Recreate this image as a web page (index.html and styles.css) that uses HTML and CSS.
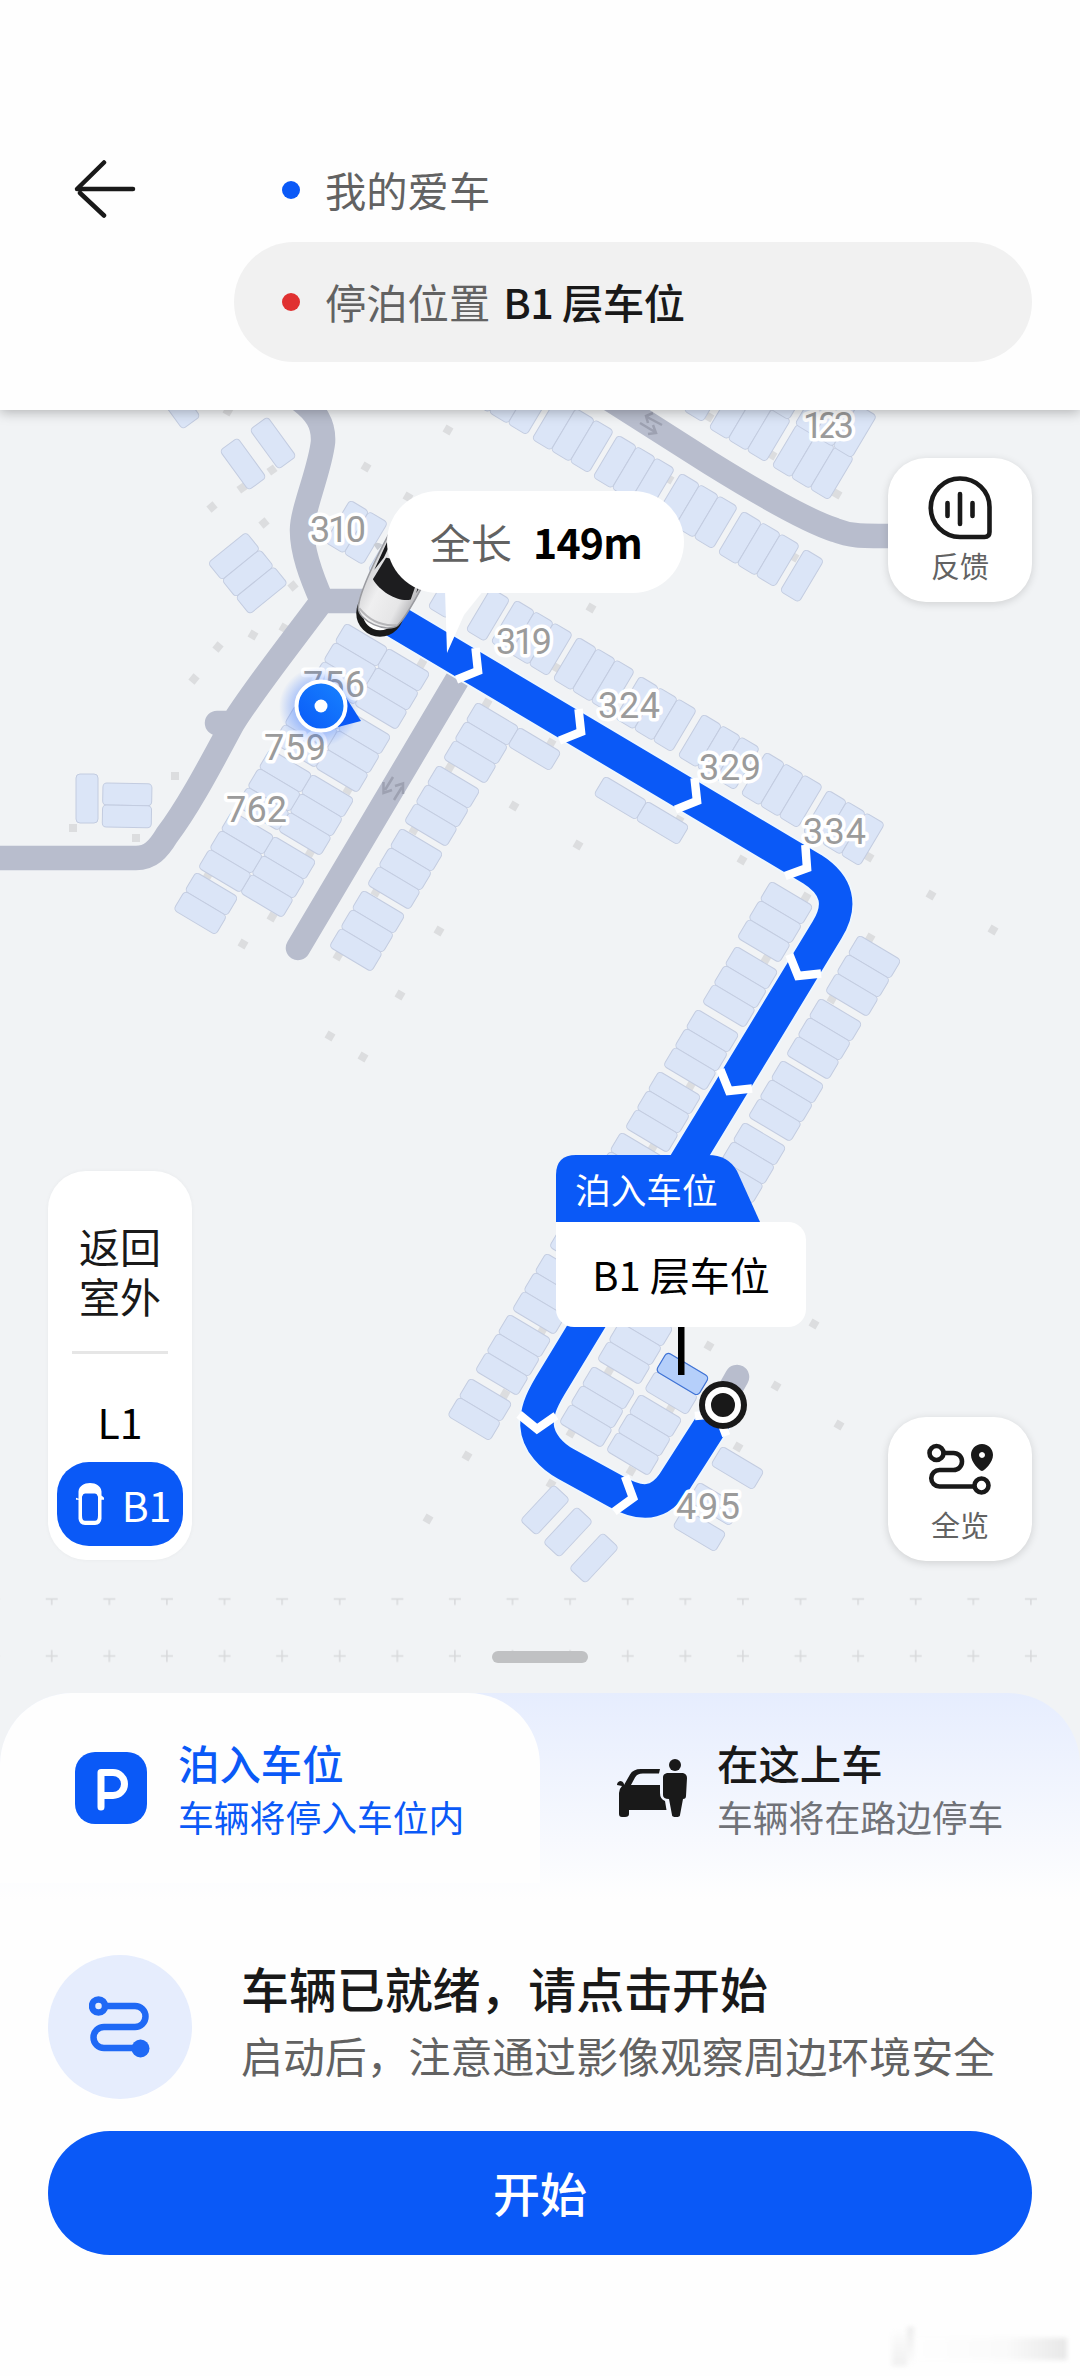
FILE: index.html
```html
<!DOCTYPE html>
<html lang="zh-CN">
<head>
<meta charset="utf-8">
<title>泊入车位</title>
<link rel="stylesheet" href="styles.css">
</head>
<body>
<div class="screen">
  <header class="header">
    <svg class="back" viewBox="0 0 62 58" width="62" height="58"><path d="M59 29H3L30 2.500M6 33L30 55.500"/></svg>
    <div class="route-fields">
      <div class="field"><i class="dot dot-blue"></i><span>我的爱车</span></div>
      <div class="field field-active"><i class="dot dot-red"></i><span>停泊位置</span><b>B1 层车位</b></div>
    </div>
  </header>

  <main class="map">
    <svg class="map-canvas" viewBox="0 410 1080 1355" width="1080" height="1355">
      <defs>
        <rect id="h" width="49" height="22" rx="4"/>
        <rect id="v" width="22" height="49" rx="4"/>
        <g id="a1"><use href="#h"/></g>
        <g id="a2"><use href="#h"/><use href="#h" y="22"/></g>
        <g id="a3"><use href="#h"/><use href="#h" y="22"/><use href="#h" y="44"/></g>
        <g id="b1"><use href="#v"/></g>
        <g id="b2"><use href="#v"/><use href="#v" x="22"/></g>
        <g id="b3"><use href="#v"/><use href="#v" x="22"/><use href="#v" x="44"/></g>
        <rect id="p" x="-4" y="-4" width="8" height="8"/>
        <path id="chev" d="M-14-18.500L0 0L-14 18.500"/>
        <pattern id="plus" x="23" y="1627.500" width="57.600" height="57" patternUnits="userSpaceOnUse"><path d="M22.700 28.500h12M28.700 22.500v12"/></pattern>
        <pattern id="tee" x="23" y="1570.500" width="57.600" height="57" patternUnits="userSpaceOnUse"><path d="M22.700 28.500h12M28.700 28.500v6"/></pattern>
        <radialGradient id="glow"><stop offset=".5" stop-color="#2a6cff" stop-opacity=".42"/><stop offset="1" stop-color="#2a6cff" stop-opacity="0"/></radialGradient>
        <linearGradient id="dotfill" x1="0" y1="1" x2="1" y2="0"><stop offset="0" stop-color="#0a59f7"/><stop offset="1" stop-color="#1783ff"/></linearGradient>
        <linearGradient id="body" x1="0" y1="0" x2="1" y2="0"><stop offset="0" stop-color="#d5d5d7"/><stop offset=".3" stop-color="#efeff0"/><stop offset=".75" stop-color="#e6e6e7"/><stop offset="1" stop-color="#b9b9bc"/></linearGradient>
      </defs>
      <rect y="1590" width="1080" height="24" fill="url(#tee)" class="marks"/>
      <rect y="1645" width="1080" height="24" fill="url(#plus)" class="marks"/>

      <g class="pillars">
        <use href="#p" transform="translate(448 430)rotate(30)"/><use href="#p" transform="translate(366 467)rotate(30)"/><use href="#p" transform="translate(408 497)rotate(30)"/>
        <use href="#p" transform="translate(272 470)rotate(54)"/><use href="#p" transform="translate(242 488)rotate(54)"/><use href="#p" transform="translate(228 411)rotate(30)"/>
        <use href="#p" transform="translate(212 507)rotate(50)"/><use href="#p" transform="translate(264 523)rotate(50)"/><use href="#p" transform="translate(293 586)rotate(50)"/>
        <use href="#p" transform="translate(284 628)rotate(30)"/><use href="#p" transform="translate(253 635)rotate(30)"/><use href="#p" transform="translate(218 647)rotate(40)"/><use href="#p" transform="translate(194 679)rotate(40)"/>
        <use href="#p" transform="translate(175 776)"/><use href="#p" transform="translate(73 828)"/><use href="#p" transform="translate(136 838)"/>
        <use href="#p" transform="translate(422 663)rotate(30)"/><use href="#p" transform="translate(348 790)rotate(30)"/><use href="#p" transform="translate(310 853)rotate(30)"/><use href="#p" transform="translate(272 917)rotate(30)"/><use href="#p" transform="translate(207 877)rotate(30)"/>
        <use href="#p" transform="translate(243 944)rotate(30)"/><use href="#p" transform="translate(338 956)rotate(30)"/><use href="#p" transform="translate(376 892)rotate(30)"/><use href="#p" transform="translate(414 830)rotate(30)"/><use href="#p" transform="translate(450 767)rotate(30)"/>
        <use href="#p" transform="translate(487 703)rotate(30)"/><use href="#p" transform="translate(551 743)rotate(30)"/><use href="#p" transform="translate(514 806)rotate(30)"/><use href="#p" transform="translate(439 931)rotate(30)"/><use href="#p" transform="translate(400 995)rotate(30)"/><use href="#p" transform="translate(330 1036)rotate(30)"/><use href="#p" transform="translate(363 1057)rotate(30)"/>
        <use href="#p" transform="translate(591 608)rotate(30)"/><use href="#p" transform="translate(557 668)rotate(30)"/><use href="#p" transform="translate(669 479)rotate(30)"/><use href="#p" transform="translate(794 557)rotate(30)"/><use href="#p" transform="translate(837 494)rotate(30)"/><use href="#p" transform="translate(772 455)rotate(30)"/><use href="#p" transform="translate(709 417)rotate(30)"/>
        <use href="#p" transform="translate(679 820)rotate(30)"/><use href="#p" transform="translate(578 845)rotate(30)"/><use href="#p" transform="translate(742 860)rotate(30)"/><use href="#p" transform="translate(869 857)rotate(30)"/><use href="#p" transform="translate(806 897)rotate(30)"/><use href="#p" transform="translate(931 895)rotate(30)"/><use href="#p" transform="translate(993 930)rotate(30)"/>
        <use href="#p" transform="translate(870 938)rotate(30)"/><use href="#p" transform="translate(832 999)rotate(30)"/><use href="#p" transform="translate(766 959)rotate(30)"/><use href="#p" transform="translate(691 1085)rotate(30)"/><use href="#p" transform="translate(653 1147)rotate(30)"/>
        <use href="#p" transform="translate(542 1331)rotate(30)"/><use href="#p" transform="translate(505 1394)rotate(30)"/><use href="#p" transform="translate(467 1456)rotate(30)"/><use href="#p" transform="translate(609 1371)rotate(30)"/><use href="#p" transform="translate(571 1433)rotate(30)"/><use href="#p" transform="translate(671 1408)rotate(30)"/><use href="#p" transform="translate(631 1471)rotate(30)"/>
        <use href="#p" transform="translate(709 1346)rotate(30)"/><use href="#p" transform="translate(776 1386)rotate(30)"/><use href="#p" transform="translate(814 1324)rotate(30)"/><use href="#p" transform="translate(839 1425)rotate(30)"/><use href="#p" transform="translate(738 1447)rotate(30)"/><use href="#p" transform="translate(551 1484)rotate(30)"/><use href="#p" transform="translate(428 1519)rotate(30)"/>
      </g>

      <g class="bays">
        <use href="#h" transform="translate(177 403)rotate(54)translate(-24.500 -11)"/>
        <use href="#h" transform="translate(273 443)rotate(54)translate(-24.500 -11)"/>
        <use href="#h" transform="translate(243 464)rotate(54)translate(-24.500 -11)"/>
        <use href="#a3" transform="translate(208 563)rotate(-39)"/>
        <use href="#b2" transform="translate(350 500)rotate(30.800)"/>
        <use href="#b1" transform="translate(393 528)rotate(30.800)"/>
        <use href="#a3" transform="translate(388 648)rotate(30.800)"/><use href="#a3" transform="translate(349 711)rotate(30.800)"/><use href="#a3" transform="translate(312 774)rotate(30.800)"/><use href="#a3" transform="translate(274 836)rotate(30.800)"/>
        <use href="#a3" transform="translate(346 623)rotate(30.800)"/><use href="#a3" transform="translate(307 686)rotate(30.800)"/><use href="#a3" transform="translate(270 749)rotate(30.800)"/><use href="#a3" transform="translate(232 811)rotate(30.800)"/><use href="#a2" transform="translate(196 872)rotate(30.800)"/>
        <use href="#a3" transform="translate(477 702)rotate(30.800)"/><use href="#a1" transform="translate(519 727)rotate(30.800)"/><use href="#a3" transform="translate(438 765)rotate(30.800)"/><use href="#a3" transform="translate(401 828)rotate(30.800)"/><use href="#a3" transform="translate(363 890)rotate(30.800)"/>
        <use href="#a1" transform="translate(605 776)rotate(30.800)"/><use href="#a1" transform="translate(647 801)rotate(30.800)"/>
        <use href="#v" x="76" y="774"/><use href="#a2" transform="translate(103 783)rotate(1)"/>
        <use href="#b3" transform="translate(495 359)rotate(30.800)"/><use href="#b3" transform="translate(557 397)rotate(30.800)"/><use href="#b3" transform="translate(618 435)rotate(30.800)"/><use href="#b3" transform="translate(681 473)rotate(30.800)"/><use href="#b3" transform="translate(743 511)rotate(30.800)"/><use href="#b1" transform="translate(805 549)rotate(30.800)"/>
        <use href="#b3" transform="translate(671 346)rotate(30.800)"/><use href="#b3" transform="translate(734 386)rotate(30.800)"/><use href="#b3" transform="translate(797 424)rotate(30.800)"/><use href="#b3" transform="translate(757 344)rotate(30.800)"/><use href="#b3" transform="translate(820 382)rotate(30.800)"/>
        <use href="#b1" transform="translate(453 565)rotate(30.800)"/><use href="#b1" transform="translate(491 588)rotate(30.800)"/>
        <use href="#b3" transform="translate(516 600)rotate(30.800)"/><use href="#b3" transform="translate(578 637)rotate(30.800)"/><use href="#b3" transform="translate(640 676)rotate(30.800)"/><use href="#b3" transform="translate(703 714)rotate(30.800)"/><use href="#b3" transform="translate(766 752)rotate(30.800)"/><use href="#b3" transform="translate(828 790)rotate(30.800)"/>
        <use href="#a3" transform="translate(771 881)rotate(30.800)"/><use href="#a3" transform="translate(736 946)rotate(30.800)"/><use href="#a3" transform="translate(697 1009)rotate(30.800)"/><use href="#a3" transform="translate(659 1071)rotate(30.800)"/><use href="#a3" transform="translate(621 1132)rotate(30.800)"/>
        <use href="#a3" transform="translate(859 935)rotate(30.800)"/><use href="#a3" transform="translate(820 998)rotate(30.800)"/><use href="#a3" transform="translate(782 1060)rotate(30.800)"/><use href="#a3" transform="translate(744 1122)rotate(30.800)"/>
        <use href="#a3" transform="translate(583 1190)rotate(30.800)"/><use href="#a3" transform="translate(546 1253)rotate(30.800)"/><use href="#a3" transform="translate(509 1314)rotate(30.800)"/><use href="#a2" transform="translate(470 1378)rotate(30.800)"/>
        <use href="#a3" transform="translate(631 1303)rotate(30.800)"/><use href="#a3" transform="translate(593 1366)rotate(30.800)"/>
        <use href="#a2" transform="translate(667 1352)rotate(30.800)"/><use href="#a3" transform="translate(640 1394)rotate(30.800)"/>
        <use href="#a1" transform="translate(722 1446)rotate(30.800)"/><use href="#a1" transform="translate(699 1482)rotate(30.800)"/><use href="#a1" transform="translate(684 1508)rotate(30.800)"/>
        <use href="#h" transform="translate(545 1510)rotate(-47)translate(-24.500 -11)"/><use href="#h" transform="translate(568 1532)rotate(-47)translate(-24.500 -11)"/><use href="#h" transform="translate(594 1558)rotate(-47)translate(-24.500 -11)"/>
      </g>

      <g class="roads">
        <path d="M300 400C316 412 324 424 323 442C320 470 302 510 302 530C302 552 311 576 322 601C290 644 255 688 233 723C215 756 190 805 167 835C158 850 150 858 136 858H-10M217 723H228M324 601H372M457 680L298 948M600 393L710 463C760 494 810 522 835 530C850 536 860 536 890 536M737 1377L724 1400"/>
      </g>
      <g class="road-arrows">
        <path d="M393 777L385 790M383.500 782V793L392 790M394 800L402 787M395 786L403 783.500V794"/>
        <path d="M662 425L647 417M653 413L646 416L648 423M640 423L655 432M653 425L656 433L648 434"/>
      </g>
      <use href="#h" class="bay-picked" transform="translate(667 1352)rotate(30.800)"/>

      <path class="route-edge" d="M385 615L812 869Q850 893 827 930L550 1386C540 1403 537 1412 537 1425C538 1443 553 1457 566 1464L617 1492C640 1505 658 1505 673 1484L716 1417"/>
      <path class="route" d="M385 615L812 869Q850 893 827 930L550 1386C540 1403 537 1412 537 1425C538 1443 553 1457 566 1464L617 1492C640 1505 658 1505 673 1484L716 1417"/>
      <g class="chevrons">
        <use href="#chev" transform="translate(478 671)rotate(31)"/><use href="#chev" transform="translate(581 732)rotate(31)"/><use href="#chev" transform="translate(697 801)rotate(31)"/><use href="#chev" transform="translate(807 868)rotate(33)"/>
        <use href="#chev" transform="translate(798 976)rotate(121)"/><use href="#chev" transform="translate(729 1091)rotate(121)"/><use href="#chev" transform="translate(537 1429)rotate(92)"/><use href="#chev" transform="translate(633 1498)rotate(17)"/><use href="#chev" transform="translate(718 1414)rotate(-58)"/>
      </g>

      <g class="map-labels">
        <text x="803" y="438" textLength="51">123</text>
        <text x="310" y="542" textLength="56">310</text>
        <text x="496" y="654" textLength="56">319</text>
        <text x="598" y="718" textLength="62">324</text>
        <text x="699" y="780" textLength="62">329</text>
        <text x="803" y="844" textLength="63">334</text>
        <text x="303" y="697" textLength="62">756</text>
        <text x="264" y="760" textLength="62">759</text>
        <text x="226" y="822" textLength="61">762</text>
        <text x="676" y="1519" textLength="64">495</text>
      </g>

      <g>
        <circle cx="380" cy="613" r="20.500" fill="#fff" stroke="#191919" stroke-width="6.500"/>
        <g transform="translate(373 623)rotate(27)">
          <path d="M-27-74q-7-1-8 4l6 3zM28-62q9 1 9 6l-9 2z" fill="#c9cdd4"/>
          <path d="M-20-7C-26-20-27-60-26-100H27C28-60 28-24 23-9C17 3-14 5-20-7Z" fill="url(#body)" stroke="#9a9ba0" stroke-width="1.500"/>
          <path d="M-20-39C-8-31 14-30 23-38L20-60C10-66-9-68-18-64Z" fill="#1d1d1f"/>
          <path d="M-23-48l3-15-1-34h-4zM25-46l-3-15 1-34h4z" fill="#17171a"/>
          <path d="M-15-69Q0-73 17-67V-110H-15Z" fill="#17171a"/>
          <path d="M-19-7Q3 3 22-9" fill="none" stroke="#b6b6b9" stroke-width="2"/>
        </g>
      </g>

      <g>
        <circle cx="319" cy="707" r="40" fill="url(#glow)"/>
        <path d="M345 696L361 721L338 727Z" fill="#0a59f7"/>
        <circle cx="321" cy="706" r="24.500" fill="url(#dotfill)" stroke="#fff" stroke-width="4"/>
        <circle cx="321" cy="706" r="6.500" fill="#fff"/>
      </g>

      <path d="M445 590H484L464 615L447 653Z" fill="#fff"/>
      <path d="M678 1325h6.500v50h-6.500z" fill="#000"/>
      <g><circle cx="723" cy="1405" r="24" fill="#191919"/><circle cx="723" cy="1405" r="15" fill="none" stroke="#fff" stroke-width="6"/></g>
    </svg>

    <div class="distance"><span>全长</span><b>149m</b></div>

    <div class="callout">
      <div class="callout-tab"><svg viewBox="0 0 204 67" width="204" height="67"><path d="M0 67V20Q0 0 20 0H152Q172 0 181 16L204 67Z"/></svg><span>泊入车位</span></div>
      <div class="callout-body">B1 层车位</div>
    </div>

    <button class="tool tool-feedback">
      <svg viewBox="0 0 66 66" width="66" height="66"><path d="M33 3.500C49 3.500 62.500 15.500 62.500 32V57Q62.500 62 57.500 62H33A29.200 29.200 0 0 1 33 3.500Z"/><path d="M20.500 28v13M33 19v30M45.500 28v13"/></svg>
      <span>反馈</span>
    </button>
    <button class="tool tool-overview">
      <svg viewBox="0 0 66 54" width="66" height="54"><circle cx="9.500" cy="11" r="7"/><circle cx="54.500" cy="43.500" r="7"/><path d="M17 11H26.500A8.500 8.500 0 0 1 26.500 28H12.500A8 8 0 0 0 12.500 44.500H47"/><path class="pin" fill-rule="evenodd" d="M55 2C61.500 2 66 7 66 13C66 20 58 28.500 55 29C52 28.500 44 20 44 13C44 7 48.500 2 55 2ZM55 10a3 3 0 1 0 .010 0Z"/></svg>
      <span>全览</span>
    </button>

    <nav class="floors">
      <div class="outdoor"><span>返回</span><span>室外</span></div>
      <div class="floor">L1</div>
      <div class="floor floor-on">
        <svg viewBox="0 0 28 40" width="28" height="42" preserveAspectRatio="none"><path fill-rule="evenodd" d="M2.500 15V8C3 3 8 0 14 0S25 3 25.500 8V12L28 14V16H25.500V34Q25 39.500 19 40H9Q3 39.500 2.500 34V16H0V14ZM6 13Q7 10 9 10H19Q21 10 22 13V31Q22 36 19 36H9Q6 36 6 31Z"/></svg>
        <span>B1</span>
      </div>
    </nav>
    <i class="handle"></i>
  </main>

  <section class="sheet">
    <div class="tabs">
      <div class="tab tab-on">
        <span class="parking"><svg viewBox="0 0 72 72" width="72" height="72"><path d="M26 55V20.500H38A11.500 11.500 0 0 1 38 43.500H27"/></svg></span>
        <div class="tab-text"><strong>泊入车位</strong><span>车辆将停入车位内</span></div>
      </div>
      <div class="tab">
        <svg class="pickup" viewBox="0 0 72 60" width="72" height="60"><circle cx="59" cy="7" r="6"/><path d="M51 15H67Q71 16 71 20L70 38Q70 41 67 41L64 57Q64 59 60 59Q56 59 56 57L53 41Q47 41 47 37L47 19Q47 16 51 15Z"/><path d="M8 27L14 16.500Q17 11 25 11H44L43 15.500H27Q21 15.500 19 19.500L15 27H44V35Q44 41 49 43L50.500 52H13V56Q13 59 9 59H6Q3 59 3 56V35Q3 31 6 28L1 27Q1 24 4 23Q7 23 8 26Z"/></svg>
        <div class="tab-text"><strong>在这上车</strong><span>车辆将在路边停车</span></div>
      </div>
    </div>
    <div class="status">
      <span class="status-icon"><svg viewBox="0 0 62 62" width="62" height="62"><circle cx="9.500" cy="10" r="6.500"/><path d="M16 10H46A10.500 10.500 0 0 1 46 31H15A10.500 10.500 0 0 0 15 52H48"/><circle class="end" cx="51.500" cy="52.500" r="9"/></svg></span>
      <div class="status-text"><strong>车辆已就绪，请点击开始</strong><span>启动后，注意通过影像观察周边环境安全</span></div>
    </div>
    <button class="start">开始</button>
    <div class="footer-shade"><i class="s1"></i><i class="s2"></i><i class="s3"></i></div>
  </section>
</div>
</body>
</html>
```
FILE: styles.css
```css
* { box-sizing: border-box; }
body { margin: 0; background: #fefefe; color: #191919; font-family: "Noto Sans CJK SC", sans-serif; }
button { border: 0; padding: 0; font: inherit; color: inherit; }
.screen { width: 1080px; height: 2376px; display: flex; flex-direction: column; overflow: hidden; }

.header { position: relative; z-index: 2; height: 410px; padding: 138px 48px 48px 74px; display: flex; background: #fefefe; box-shadow: 0 2px 12px rgba(0,0,0,.28); }
.back { margin: 22px 98px 0 0; fill: none; stroke: #191919; stroke-width: 4.500; stroke-linecap: round; stroke-linejoin: round; }
.route-fields { flex: 1; }
.field { height: 104px; padding-left: 48px; display: flex; align-items: center; font-size: 41.300px; color: #626262; white-space: nowrap; }
.field span, .field b { margin-bottom: 3px; }
.field-active { height: 120px; border-radius: 60px; background: #f1f1f1; }
.field b { margin-left: 13px; color: #191919; font-weight: 500; letter-spacing: -.5px; }
.dot { width: 18px; height: 18px; margin-right: 25px; border-radius: 50%; }
.dot-blue { background: #0a59f7; }
.dot-red { background: #e03131; }

.map { position: relative; flex: none; height: 1355px; background: #f1f3f5; }
.map-canvas { display: block; }
.marks { stroke: none; }
pattern path { stroke: #d8d9db; stroke-width: 1.500; }
.pillars { fill: #dcdddf; }
.bays { fill: #dbe5f7; stroke: #c3cce0; stroke-width: 1; }
.bay-picked { fill: #b5cffa; stroke: #3f73d6; stroke-width: 1.200; }
.roads { fill: none; stroke: #b8bdcd; stroke-width: 24.500; stroke-linecap: round; stroke-linejoin: round; }
.road-arrows { fill: none; stroke: #9da1b1; stroke-width: 2.500; }
.route-edge { fill: none; stroke: #eef7ff; stroke-width: 37; }
.route { fill: none; stroke: #0a59f7; stroke-width: 33.500; }
.chevrons { fill: none; stroke: #fff; stroke-width: 8.500; }
.map-labels { font: 400 36px Roboto, "Noto Sans", sans-serif; fill: #9b9b9b; stroke: #fff; stroke-width: 7px; paint-order: stroke; stroke-linejoin: round; }

.distance { position: absolute; left: 387px; top: 81px; width: 297px; height: 102px; padding: 0 0 2px 43px; display: flex; align-items: center; gap: 21px; border-radius: 51px; background: #fff; color: #626262; font-size: 41px; white-space: nowrap; }
.distance b { color: #000; font: 700 41px "Noto Sans CJK SC", sans-serif; letter-spacing: -.8px; }

.callout { position: absolute; left: 556px; top: 745px; width: 250px; }
.callout-tab { position: relative; width: 204px; height: 67px; padding-left: 19px; font-size: 35.700px; line-height: 67px; color: #fff; white-space: nowrap; }
.callout-tab svg { position: absolute; left: 0; top: 0; fill: #0a59f7; }
.callout-tab span { position: relative; }
.callout-body { height: 105px; border-radius: 0 18px 18px 18px; background: #fff; color: #000; font-size: 40px; line-height: 105px; text-align: center; white-space: nowrap; }

.tool { position: absolute; left: 888px; width: 144px; height: 144px; border-radius: 38px; background: #fff; display: flex; flex-direction: column; align-items: center; font-size: 29px; line-height: 34px; color: #626262; box-shadow: 0 2px 8px rgba(0,0,0,.14); }
.tool svg { fill: none; stroke: #191919; stroke-width: 4.600; stroke-linecap: round; }
.tool-feedback { top: 48px; padding-top: 17px; }
.tool-feedback span { margin-top: 7px; }
.tool-overview { top: 1007px; padding-top: 25px; }
.tool-overview span { margin-top: 11px; }
.tool svg .pin { fill: #191919; stroke: none; }

.floors { position: absolute; left: 48px; top: 761px; width: 144px; height: 389px; padding: 49px 9px 14px; border-radius: 38px; background: #fff; display: flex; flex-direction: column; box-shadow: 0 0 4px rgba(0,0,0,.04); }
.outdoor { height: 134px; margin: 0 15px 26px; padding-left: 7px; border-bottom: 3px solid #e6e6e6; font-size: 41px; line-height: 50px; white-space: nowrap; }
.outdoor span { display: block; }
.floor { height: 82px; display: flex; align-items: center; justify-content: center; font-size: 41px; color: #000; }
.floor-on { height: 84px; gap: 18px; border-radius: 32px; background: #0a59f7; color: #fff; padding-left: 7px; }
.floor-on svg { fill: #fff; }
.handle { position: absolute; left: 492px; top: 1241px; width: 96px; height: 12px; border-radius: 6px; background: #c0c1c3; }

.sheet { position: relative; height: 683px; margin-top: -72px; flex: none; background: linear-gradient(#e6edfe 0, #fefefe 207px); border-radius: 72px 72px 0 0; }
.tabs { display: grid; grid-template-columns: 540px 540px; height: 190px; }
.tab { display: flex; align-items: flex-start; padding: 42px 0 0 76px; }
.tab-on { padding-left: 75px; border-radius: 72px 72px 0 0; background: #fefefe; color: #0a59f7; }
.parking { width: 72px; height: 72px; margin: 17px 31px 0 0; border-radius: 20px; background: #0a59f7; }
.parking svg { display: block; fill: none; stroke: #fff; stroke-width: 7; stroke-linejoin: round; stroke-linecap: round; }
.pickup { margin: 23px 29px 0 0; fill: #191919; }
.tab-text { display: flex; flex-direction: column; white-space: nowrap; }
.tab-text strong { font-size: 41.400px; line-height: 54px; font-weight: 500; }
.tab-text span { font-size: 35.800px; line-height: 54px; }
.tab:not(.tab-on) .tab-text span { color: #707278; }
.status { display: flex; gap: 49px; margin: 72px 48px 0; }
.status-icon { flex: none; width: 144px; height: 144px; padding: 41px; border-radius: 50%; background: #e6edfd; }
.status-icon svg { display: block; fill: none; stroke: #1f69f5; stroke-width: 6.500; }
.status-icon .end { fill: #1f69f5; stroke: none; }
.status-text { display: flex; flex-direction: column; margin-top: -3px; white-space: nowrap; }
.status-text strong { font-size: 47.900px; line-height: 70px; font-weight: 500; }
.status-text span { font-size: 41.900px; line-height: 66px; color: #626262; }
.start { display: block; width: 984px; height: 124px; margin: 32px 48px 0; padding-bottom: 3px; border-radius: 62px; background: #0a59f7; color: #fff; font-size: 47px; font-weight: 500; }
.footer-shade { display: flex; align-items: center; width: 180px; height: 40px; margin: 74px 0 0 892px; filter: blur(2px); }
.footer-shade i { display: block; }
.s1 { width: 15px; height: 34px; background: linear-gradient(#fcfcfc, #f0f0f0); }
.s2 { width: 7px; height: 36px; margin-bottom: 8px; background: linear-gradient(#ececec, #fcfcfc); }
.s3 { width: 153px; height: 22px; background: linear-gradient(90deg, #fefefe, #fafafa 60%, #e8e8e8); }
```
